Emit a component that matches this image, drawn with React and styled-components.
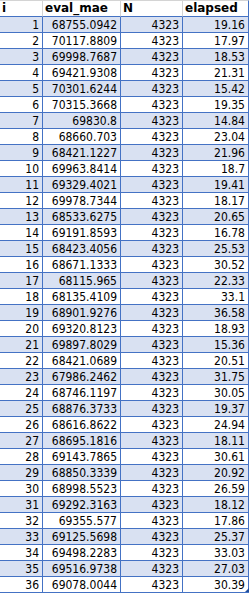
import styled, { createGlobalStyle } from "styled-components";

const GlobalStyle = createGlobalStyle`
  html, body {
    margin: 0;
    padding: 0;
    background: #ffffff;
  }
`;

const rows = [
  ["68755.0942", "19.16"],
  ["70117.8809", "17.97"],
  ["69998.7687", "18.53"],
  ["69421.9308", "21.31"],
  ["70301.6244", "15.42"],
  ["70315.3668", "19.35"],
  ["69830.8", "14.84"],
  ["68660.703", "23.04"],
  ["68421.1227", "21.96"],
  ["69963.8414", "18.7"],
  ["69329.4021", "19.41"],
  ["69978.7344", "18.17"],
  ["68533.6275", "20.65"],
  ["69191.8593", "16.78"],
  ["68423.4056", "25.53"],
  ["68671.1333", "30.52"],
  ["68115.965", "22.33"],
  ["68135.4109", "33.1"],
  ["68901.9276", "36.58"],
  ["69320.8123", "18.93"],
  ["69897.8029", "15.36"],
  ["68421.0689", "20.51"],
  ["67986.2462", "31.75"],
  ["68746.1197", "30.05"],
  ["68876.3733", "19.37"],
  ["68616.8622", "24.94"],
  ["68695.1816", "18.11"],
  ["69143.7865", "30.61"],
  ["68850.3339", "20.92"],
  ["68998.5523", "26.59"],
  ["69292.3163", "18.12"],
  ["69355.577", "17.86"],
  ["69125.5698", "25.37"],
  ["69498.2283", "33.03"],
  ["69516.9738", "27.03"],
  ["69078.0044", "30.39"],
];

const Sheet = styled.div`
  position: relative;
  width: 250px;
  font-family: "DejaVu Sans Condensed", "DejaVu Sans", sans-serif;
  font-size: 12px;
  color: #000000;
`;

const Grid = styled.div`
  display: grid;
  grid-template-columns: 43px 78px 62px 66px;
  width: 249px;
`;

const Head = styled.div`
  height: 15px;
  line-height: 15px;
  padding-left: 2px;
  font-family: "DejaVu Sans", sans-serif;
  font-weight: bold;
  border-top: 1px solid #d4d4d4;
  border-bottom: 1px solid #4472c4;
  border-right: 1px solid ${(p) => (p.$last ? "#4472c4" : "#d4d4d4")};
  white-space: nowrap;
  overflow: hidden;
`;

const Cell = styled.div`
  height: 15px;
  line-height: 16px;
  padding-right: 3px;
  text-align: right;
  background: ${(p) => (p.$shade ? "#d9e1f2" : "#ffffff")};
  border-bottom: 1px solid #4472c4;
  border-right: 1px solid #4472c4;
  white-space: nowrap;
`;

const Handle = styled.div`
  position: absolute;
  right: 1px;
  bottom: 1px;
  width: 0;
  height: 0;
  border-left: 4px solid transparent;
  border-bottom: 4px solid #1f4e9c;
`;

export default function App() {
  return (
    <>
      <GlobalStyle />
      <Sheet>
        <Grid>
          <Head>i</Head>
          <Head>eval_mae</Head>
          <Head>N</Head>
          <Head $last>elapsed</Head>
          {rows.map(([mae, elapsed], idx) => {
            const shade = idx % 2 === 0;
            return [
              <Cell key={`i${idx}`} $shade={shade}>{idx + 1}</Cell>,
              <Cell key={`m${idx}`} $shade={shade}>{mae}</Cell>,
              <Cell key={`n${idx}`} $shade={shade}>4323</Cell>,
              <Cell key={`e${idx}`} $shade={shade}>{elapsed}</Cell>,
            ];
          })}
        </Grid>
        <Handle />
      </Sheet>
    </>
  );
}
